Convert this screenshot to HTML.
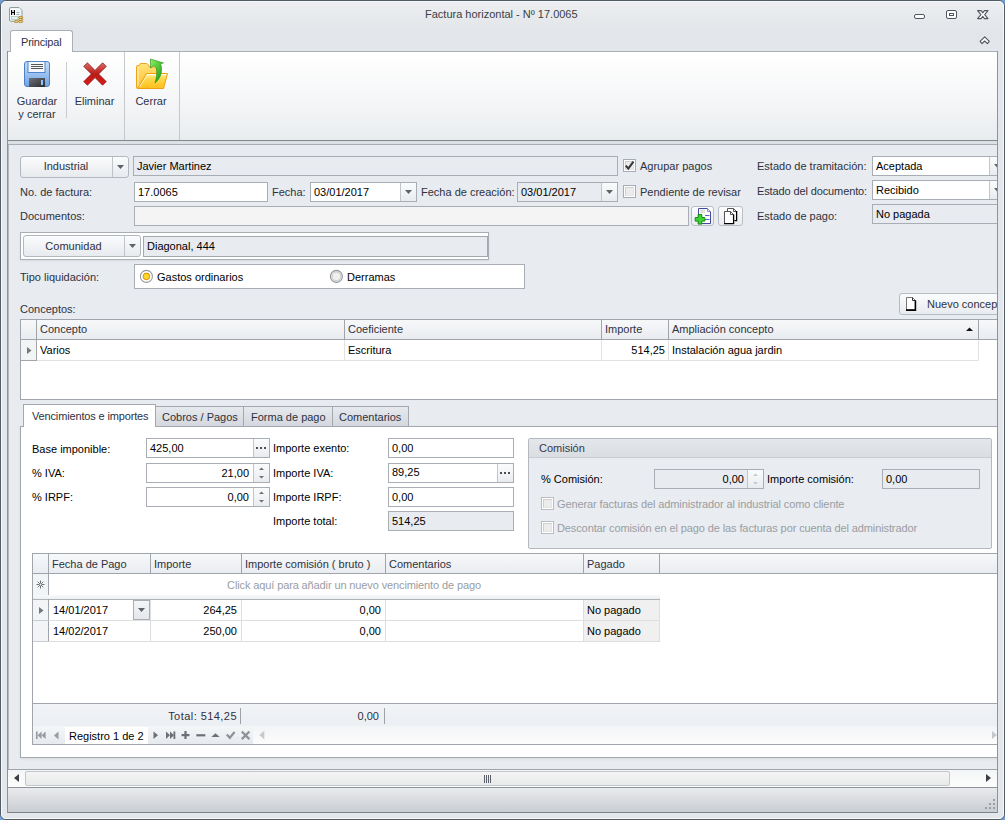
<!DOCTYPE html><html><head><meta charset="utf-8"><style>
*{margin:0;padding:0;box-sizing:border-box}
html,body{width:1005px;height:820px;overflow:hidden;background:#6f9fd8}
body{position:relative;font-family:"Liberation Sans",sans-serif;font-size:11px;color:#1e1e1e}
.r{position:absolute}
.t{position:absolute;white-space:pre;line-height:13px;font-size:11px;color:#202020}
.lbl{color:#2e3240}
.dk{color:#000}
.gry{color:#9a9da2}
.fld{position:absolute;background:#fff;border:1px solid #a9aeb5}
.ro{background:#e8ebef}
.btn{position:absolute;border:1px solid #b7bcc3;border-radius:3px;background:linear-gradient(#fbfcfd,#e9ecf0)}
.ddb{position:absolute;top:0;bottom:0;width:17px;right:0;border-left:1px solid #b9bec4;background:linear-gradient(#f9fafb,#e6e9ed)}
.arr{position:absolute;width:0;height:0;border-left:4px solid transparent;border-right:4px solid transparent;border-top:4px solid #5a6068}
.chk{position:absolute;width:13px;height:13px;border:1px solid #a9aeb5;background:linear-gradient(#eceef1,#f8f9fa)}
</style></head><body>
<div class="r " style="left:0px;top:0px;width:1005px;height:820px;background:#e3e6ea;border:1px solid #535b65;border-radius:6px 6px 6px 6px"></div>
<div class="r " style="left:1px;top:1px;width:1003px;height:818px;border:1px solid #f7f8f9;border-radius:5px 5px 5px 5px;background:linear-gradient(#eceef1 0px,#e2e5e9 30px,#e3e6ea 50px)"></div>
<svg class="r" style="left:8px;top:6px" width="18" height="18" viewBox="0 0 18 18">
<path d="M2.8 1.5h8.2l3 3v9.5a1.3 1.3 0 0 1-1.3 1.3h-9.9a1.3 1.3 0 0 1-1.3-1.3v-11.2a1.3 1.3 0 0 1 1.3-1.3z" fill="#eef7f7" stroke="#8d9b9b" stroke-width="1"/>
<circle cx="11.5" cy="3.3" r="0.9" fill="#fff"/>
<rect x="2.3" y="3" width="5.4" height="6.8" fill="#fff"/>
<path d="M3.6 4v5M6.4 4v5M3.6 6.5h2.8" stroke="#000" stroke-width="1.2"/>
<path d="M8.5 6.5h3M8.5 8.5h3" stroke="#93a3a3" stroke-width="0.9"/>
<rect x="3.5" y="10.5" width="6.5" height="3" fill="#dff1f1" stroke="#b3c4c4" stroke-width="0.8"/>
<g fill="#ecd27a" stroke="#a67c22" stroke-width="0.8">
<ellipse cx="12.6" cy="11.4" rx="2.2" ry="1.05"/><ellipse cx="12.6" cy="13.45" rx="2.2" ry="1.05"/><ellipse cx="12.6" cy="15.5" rx="2.2" ry="1.05"/><ellipse cx="8.3" cy="15.5" rx="2.2" ry="1.05"/>
</g></svg>
<div class="t " style="left:425px;top:8px;color:#3b3e44">Factura horizontal - Nº 17.0065</div>
<div class="r " style="left:914px;top:14px;width:11px;height:5px;background:#fff;border:1px solid #50565e;border-radius:2px"></div>
<div class="r " style="left:946px;top:10px;width:11px;height:9px;background:#fff;border:1px solid #50565e;border-radius:2px"></div>
<div class="r " style="left:949px;top:13px;width:5px;height:3px;border:1px solid #50565e"></div>
<svg class="r" style="left:976px;top:9px" width="14" height="12" viewBox="0 0 14 12">
<path d="M1.6 1.6H5.2L6.8 3.9L8.4 1.6H12L8.7 5.6L12 9.6H8.4L6.8 7.3L5.2 9.6H1.6L4.9 5.6Z" fill="#fff" stroke="#4f555d" stroke-width="1.1" stroke-linejoin="round"/>
</svg>
<svg class="r" style="left:979px;top:35px" width="12" height="11" viewBox="0 0 12 11">
<path d="M5.7 1.8L10.3 6.4L8.4 8.6L5.7 6L3 8.6L1.1 6.4Z" fill="#fff" stroke="#4f555d" stroke-width="1.1" stroke-linejoin="round"/>
</svg>
<div class="r " style="left:7px;top:51px;width:991px;height:90px;border:1px solid #a9afb7;border-bottom-color:#80868d;background:linear-gradient(#ffffff 0px,#f7f8f9 40px,#e9ecef 88px)"></div>
<div class="r " style="left:10px;top:30px;width:63px;height:22px;border:1px solid #a9afb7;border-bottom:none;border-radius:3px 3px 0 0;background:#fff"></div>
<div class="t " style="left:21px;top:36px;color:#2f3347;letter-spacing:-0.2px">Principal</div>
<svg class="r" style="left:24px;top:61px" width="26" height="26" viewBox="0 0 26 26">
<defs><linearGradient id="fb" x1="0" y1="0" x2="0" y2="1"><stop offset="0" stop-color="#c7def8"/><stop offset="1" stop-color="#6ea4e6"/></linearGradient>
<linearGradient id="fd" x1="0" y1="0" x2="1" y2="1"><stop offset="0" stop-color="#6e737a"/><stop offset="1" stop-color="#2a2b2e"/></linearGradient></defs>
<rect x="0.5" y="0.5" width="25" height="25" rx="2.5" fill="url(#fb)" stroke="#4f7fc3"/>
<rect x="4" y="0.5" width="17" height="11" fill="#f5f7fa" stroke="#4f86cf"/>
<path d="M7 3.5h12M7 5.5h12M7 7.5h12" stroke="#555" stroke-width="1"/>
<rect x="5" y="17" width="16" height="9" fill="url(#fd)"/>
<rect x="17" y="19" width="2" height="5" fill="#8ec3ff"/>
</svg>
<div class="r " style="left:66px;top:62px;width:1px;height:56px;background:#c9cdd2"></div>
<svg class="r" style="left:83px;top:62px" width="24" height="24" viewBox="0 0 24 24">
<defs><linearGradient id="xr" x1="0" y1="0" x2="0" y2="1"><stop offset="0" stop-color="#e06a66"/><stop offset="0.5" stop-color="#b81c18"/><stop offset="1" stop-color="#e01a14"/></linearGradient></defs>
<path d="M4.4 0.8 L12 8.4 L19.6 0.8 L23.2 4.4 L15.6 12 L23.2 19.6 L19.6 23.2 L12 15.6 L4.4 23.2 L0.8 19.6 L8.4 12 L0.8 4.4 Z" fill="url(#xr)" stroke="#8a1512" stroke-width="0.8" stroke-linejoin="round"/>
</svg>
<div class="r " style="left:124px;top:52px;width:1px;height:88px;background:#c5c9ce"></div>
<svg class="r" style="left:135px;top:58px" width="34" height="32" viewBox="0 0 34 32">
<defs><linearGradient id="fo" x1="0" y1="0" x2="0" y2="1"><stop offset="0" stop-color="#fff2b0"/><stop offset="0.35" stop-color="#ffd84a"/><stop offset="1" stop-color="#ffbe1c"/></linearGradient>
<linearGradient id="fk" x1="0" y1="0" x2="0" y2="1"><stop offset="0" stop-color="#ffe27a"/><stop offset="1" stop-color="#ffc22e"/></linearGradient>
<linearGradient id="ar" x1="0" y1="0" x2="1" y2="1"><stop offset="0" stop-color="#92f060"/><stop offset="0.5" stop-color="#4cc436"/><stop offset="1" stop-color="#14820c"/></linearGradient></defs>
<path d="M2.5 7.5 Q1.5 7.5 1.5 8.5 L1.5 29.5 Q1.5 30.5 2.5 30.5 L22 30.5 L22 9 L14.5 9 L13 6.5 Q12.5 5.5 11.5 5.5 L6 5.5 Q5 5.5 4.5 6.5 L4 7.5 Z" fill="url(#fk)" stroke="#eda21a"/>
<path d="M3 9v20" stroke="#fff6cf" stroke-width="1"/>
<path d="M11.5 15.5 L32.5 15.5 L28.5 30.5 L2.5 30.5 Z" fill="url(#fo)" stroke="#ee9f14" stroke-linejoin="round"/>
<path d="M12.3 16.6 L31.2 16.6" stroke="#fffbe6" stroke-width="1.2"/>
<path d="M4.5 29 L12.5 17" stroke="#fff6cf" stroke-width="0.9"/>
<path d="M15.5 1 L15.5 10 L19 7.5 C22 9.5 23 14 20 25 C26 20 28 13 25.5 5.5 L28.5 5 Z" fill="url(#ar)" stroke="#238a18" stroke-width="0.6"/>
</svg>
<div class="r " style="left:179px;top:52px;width:1px;height:88px;background:#c5c9ce"></div>
<div class="t " style="left:7.0px;width:60px;text-align:center;top:95px;color:#2f3347">Guardar</div>
<div class="t " style="left:7.0px;width:60px;text-align:center;top:108px;color:#2f3347">y cerrar</div>
<div class="t " style="left:64.5px;width:60px;text-align:center;top:95px;color:#2f3347">Eliminar</div>
<div class="t " style="left:121.0px;width:60px;text-align:center;top:95px;color:#2f3347">Cerrar</div>
<div class="r " style="left:8px;top:141px;width:989px;height:3px;background:#dde0e4"></div>
<div class="r " style="left:7px;top:144px;width:991px;height:626px;border-left:1px solid #8d939a;border-right:1px solid #8d939a;border-top:1px solid #a8adb4;border-bottom:1px solid #a0a5ac;background:#e8ebef"></div>
<div class="r " style="left:8px;top:145px;width:1px;height:624px;background:#b4b9bf"></div>
<div class="r" style="left:0;top:0;width:997px;height:769px;overflow:hidden">
<div class="r " style="left:20px;top:156px;width:109px;height:22px;border:1px solid #b3b8bf;border-radius:3px;background:linear-gradient(#fbfcfd,#e7eaee)"></div>
<div class="r " style="left:112px;top:157px;width:1px;height:20px;background:#c0c4ca"></div>
<svg class="r" style="left:117px;top:165px" width="8" height="5"><path d="M0 0h7l-3.5 4z" fill="#5d636b"/></svg>
<div class="t lbl" style="left:20.0px;width:92px;text-align:center;top:160px;">Industrial</div>
<div class="r fld ro" style="left:133px;top:156px;width:485px;height:20px;"></div>
<div class="t dk" style="left:137px;top:160px;">Javier Martinez</div>
<div class="r " style="left:623px;top:159px;width:13px;height:13px;border:1px solid #a5acb5;background:#fff"></div>
<div class="r " style="left:625px;top:161px;width:9px;height:9px;border:1px solid #cfcfcf;border-right-color:#e4e4e4;border-bottom-color:#e4e4e4;background:#ececec"></div>
<svg class="r" style="left:623px;top:159px" width="13" height="13" viewBox="0 0 13 13"><path d="M2.8 6.6 L5.3 9.6 L10.4 2.6" stroke="#37393d" stroke-width="2.1" fill="none"/></svg>
<div class="t lbl" style="left:640px;top:160px;">Agrupar pagos</div>
<div class="t lbl" style="left:757px;top:160px;">Estado de tramitación:</div>
<div class="r fld " style="left:872px;top:156px;width:140px;height:20px;"></div>
<div class="r " style="left:989px;top:157px;width:17px;height:18px;border-left:1px solid #c2c6cc;background:linear-gradient(#fafbfc,#e9ecef);"></div>
<svg class="r" style="left:994px;top:164px" width="8" height="5"><path d="M0 0h7l-3.5 4z" fill="#5d636b"/></svg>
<div class="t dk" style="left:876px;top:160px;">Aceptada</div>
<div class="t lbl" style="left:20px;top:186px;">No. de factura:</div>
<div class="r fld " style="left:134px;top:182px;width:134px;height:20px;"></div>
<div class="t dk" style="left:138px;top:186px;">17.0065</div>
<div class="t lbl" style="left:272px;top:186px;">Fecha:</div>
<div class="r fld " style="left:310px;top:182px;width:107px;height:20px;"></div>
<div class="r " style="left:400px;top:183px;width:16px;height:18px;border-left:1px solid #c2c6cc;background:linear-gradient(#fafbfc,#e9ecef);"></div>
<svg class="r" style="left:405px;top:190px" width="8" height="5"><path d="M0 0h7l-3.5 4z" fill="#5d636b"/></svg>
<div class="t dk" style="left:314px;top:186px;">03/01/2017</div>
<div class="t lbl" style="left:421px;top:186px;">Fecha de creación:</div>
<div class="r fld ro" style="left:517px;top:182px;width:101px;height:20px;"></div>
<div class="r " style="left:601px;top:183px;width:16px;height:18px;border-left:1px solid #c2c6cc;background:linear-gradient(#fafbfc,#e9ecef);"></div>
<svg class="r" style="left:606px;top:190px" width="8" height="5"><path d="M0 0h7l-3.5 4z" fill="#5d636b"/></svg>
<div class="t dk" style="left:521px;top:186px;">03/01/2017</div>
<div class="r " style="left:623px;top:185px;width:13px;height:13px;border:1px solid #a5acb5;background:#fff"></div>
<div class="r " style="left:625px;top:187px;width:9px;height:9px;border:1px solid #cfcfcf;border-right-color:#e4e4e4;border-bottom-color:#e4e4e4;background:#ececec"></div>
<div class="t lbl" style="left:640px;top:186px;">Pendiente de revisar</div>
<div class="t lbl" style="left:757px;top:185px;letter-spacing:-0.12px">Estado del documento:</div>
<div class="r fld " style="left:872px;top:180px;width:140px;height:20px;"></div>
<div class="r " style="left:989px;top:181px;width:17px;height:18px;border-left:1px solid #c2c6cc;background:linear-gradient(#fafbfc,#e9ecef);"></div>
<svg class="r" style="left:994px;top:188px" width="8" height="5"><path d="M0 0h7l-3.5 4z" fill="#5d636b"/></svg>
<div class="t dk" style="left:876px;top:184px;">Recibido</div>
<div class="t lbl" style="left:20px;top:210px;">Documentos:</div>
<div class="r fld " style="left:134px;top:206px;width:555px;height:20px;background:#f4f4f4"></div>
<div class="r " style="left:691px;top:206px;width:23px;height:20px;border:1px solid #b9bec4;border-radius:3px;background:linear-gradient(#fbfcfd,#e9ecf0)"></div>
<svg class="r" style="left:694px;top:206px" width="20" height="20" viewBox="0 0 20 20">
<path d="M4.5 2.5h9l3 3v12h-12z" fill="#fff" stroke="#454a9a" stroke-width="1" stroke-linejoin="miter"/>
<path d="M13.5 2.5v3h3" fill="#e8e8f4" stroke="#8c90c8" stroke-width="1"/>
<rect x="6" y="3.5" width="5" height="3.5" fill="#e2e2e2"/>
<path d="M11 9.5h4.5M11 13.5h4.5" stroke="#5a63d0" stroke-width="1"/>
<path d="M4.2 8.5h3.6v3h3v3.6h-3v3h-3.6v-3h-3v-3.6h3z" fill="#3dd435" stroke="#168c12" stroke-width="1"/>
</svg>
<div class="r " style="left:718px;top:206px;width:25px;height:20px;border:1px solid #b9bec4;border-radius:3px;background:linear-gradient(#fbfcfd,#e9ecf0)"></div>
<svg class="r" style="left:722px;top:206px" width="20" height="20" viewBox="0 0 20 20">
<path d="M5.5 2.5h6l3 3v9h-9z" fill="#fff" stroke="#555" stroke-width="1"/>
<path d="M11.5 2.5v3h3" fill="none" stroke="#555" stroke-width="1"/>
<path d="M14.6 5v9.6h-1.5" stroke="#000" stroke-width="1.3" fill="none"/>
<path d="M2.5 5.5h6l3 3v9h-9z" fill="#fff" stroke="#555" stroke-width="1"/>
<path d="M8.5 5.5v3h3" fill="none" stroke="#555" stroke-width="1"/>
<path d="M2 17.6h9.8M11.6 8.5v9.6" stroke="#000" stroke-width="1.3"/>
</svg>
<div class="t lbl" style="left:757px;top:210px;">Estado de pago:</div>
<div class="r fld ro" style="left:872px;top:204px;width:140px;height:20px;"></div>
<div class="t dk" style="left:876px;top:208px;">No pagada</div>
<div class="r " style="left:20px;top:232px;width:469px;height:28px;border:1px solid #a9aeb5;background:#fff;box-shadow:0 1px 2px rgba(0,0,0,0.07)"></div>
<div class="r " style="left:21px;top:233px;width:467px;height:26px;background:linear-gradient(#fff,#fff)"></div>
<div class="r " style="left:23px;top:235px;width:118px;height:22px;border:1px solid #b3b8bf;border-radius:3px;background:linear-gradient(#fbfcfd,#e7eaee)"></div>
<div class="r " style="left:124px;top:236px;width:1px;height:20px;background:#c0c4ca"></div>
<svg class="r" style="left:129px;top:244px" width="8" height="5"><path d="M0 0h7l-3.5 4z" fill="#5d636b"/></svg>
<div class="t lbl" style="left:23.0px;width:101px;text-align:center;top:240px;">Comunidad</div>
<div class="r fld ro" style="left:143px;top:236px;width:345px;height:21px;border-color:#a3a8af"></div>
<div class="t dk" style="left:147px;top:240px;">Diagonal, 444</div>
<div class="t lbl" style="left:20px;top:271px;">Tipo liquidación:</div>
<div class="r fld " style="left:134px;top:264px;width:391px;height:25px;"></div>
<svg class="r" style="left:139px;top:269px" width="15" height="15" viewBox="0 0 15 15"><circle cx="7.4" cy="7.4" r="6" fill="#fff" stroke="#959aa1" stroke-width="1.1"/><circle cx="7.4" cy="7.4" r="3.3" fill="#ffd726" stroke="#e08a10" stroke-width="1"/></svg>
<div class="t dk" style="left:157px;top:271px;">Gastos ordinarios</div>
<svg class="r" style="left:329px;top:269px" width="15" height="15" viewBox="0 0 15 15"><circle cx="7.4" cy="7.4" r="6" fill="#e4e4e4" stroke="#959aa1" stroke-width="1.1"/><circle cx="7.4" cy="7.4" r="4.3" fill="#f0f0f0" stroke="#c4c4c4" stroke-width="0.8"/></svg>
<div class="t dk" style="left:347px;top:271px;">Derramas</div>
<div class="t lbl" style="left:20px;top:303px;">Conceptos:</div>
<div class="r " style="left:899px;top:293px;width:110px;height:22px;border:1px solid #b7bcc3;border-radius:3px;background:linear-gradient(#fbfcfd,#e8ebef)"></div>
<svg class="r" style="left:905px;top:296px" width="13" height="15" viewBox="0 0 13 15">
<path d="M1.5 1.5h6l3 3v9.5h-9z" fill="#fff" stroke="#777" stroke-width="1"/>
<path d="M7.5 1.5v3h3" fill="none" stroke="#333" stroke-width="1"/>
<path d="M10.4 4.5v9.6h-9.4" fill="none" stroke="#000" stroke-width="1.6"/>
</svg>
<div class="t lbl" style="left:927px;top:298px;">Nuevo concepto</div>
<div class="r " style="left:20px;top:319px;width:990px;height:81px;border:1px solid #a0a5ac;background:#fff"></div>
<div class="r " style="left:21px;top:320px;width:990px;height:19px;background:linear-gradient(#f7f8fa,#e9ecf0)"></div>
<div class="r " style="left:21px;top:339px;width:976px;height:1px;background:#a0a5ac"></div>
<div class="r " style="left:36px;top:320px;width:1px;height:40px;background:#a0a5ac"></div>
<div class="r " style="left:21px;top:340px;width:15px;height:20px;background:#f3f4f6"></div>
<div class="r " style="left:344px;top:320px;width:1px;height:19px;background:#a0a5ac"></div>
<div class="r " style="left:601px;top:320px;width:1px;height:19px;background:#a0a5ac"></div>
<div class="r " style="left:668px;top:320px;width:1px;height:19px;background:#a0a5ac"></div>
<div class="r " style="left:978px;top:320px;width:1px;height:19px;background:#a0a5ac"></div>
<div class="r " style="left:344px;top:340px;width:1px;height:20px;background:#dfe1e4"></div>
<div class="r " style="left:601px;top:340px;width:1px;height:20px;background:#dfe1e4"></div>
<div class="r " style="left:668px;top:340px;width:1px;height:20px;background:#dfe1e4"></div>
<div class="r " style="left:978px;top:340px;width:1px;height:21px;background:#dfe1e4"></div>
<div class="r " style="left:37px;top:360px;width:942px;height:1px;background:#dfe1e4"></div>
<div class="r " style="left:21px;top:360px;width:16px;height:1px;background:#a0a5ac"></div>
<svg class="r" style="left:27px;top:347px" width="6" height="8"><path d="M0 0L4.5 3.5L0 7z" fill="#73787f"/></svg>
<div class="t lbl" style="left:40px;top:323px;">Concepto</div>
<div class="t lbl" style="left:348px;top:323px;">Coeficiente</div>
<div class="t lbl" style="left:605px;top:323px;">Importe</div>
<div class="t lbl" style="left:672px;top:323px;">Ampliación concepto</div>
<svg class="r" style="left:966px;top:327px" width="8" height="5"><path d="M0 4h7l-3.5-3.5z" fill="#111"/></svg>
<div class="t dk" style="left:40px;top:344px;">Varios</div>
<div class="t dk" style="left:348px;top:344px;">Escritura</div>
<div class="t dk" style="left:265px;width:400px;text-align:right;top:344px;">514,25</div>
<div class="t dk" style="left:672px;top:344px;">Instalación agua jardin</div>
<div class="r " style="left:20px;top:426px;width:990px;height:332px;border:1px solid #a3a8af;background:#fff;box-shadow:0 1px 3px rgba(0,0,0,0.07)"></div>
<div class="r " style="left:155px;top:406px;width:89px;height:21px;border:1px solid #a3a8af;background:linear-gradient(#e6e9ed,#d4d8de)"></div>
<div class="r " style="left:243px;top:406px;width:90px;height:21px;border:1px solid #a3a8af;background:linear-gradient(#e6e9ed,#d4d8de)"></div>
<div class="r " style="left:332px;top:406px;width:77px;height:21px;border:1px solid #a3a8af;background:linear-gradient(#e6e9ed,#d4d8de)"></div>
<div class="r " style="left:23px;top:404px;width:133px;height:23px;border:1px solid #a3a8af;border-bottom:none;background:#fff"></div>
<div class="t lbl" style="left:32px;top:410px;letter-spacing:-0.15px">Vencimientos e importes</div>
<div class="t lbl" style="left:162px;top:411px;">Cobros / Pagos</div>
<div class="t lbl" style="left:251px;top:411px;">Forma de pago</div>
<div class="t lbl" style="left:339px;top:411px;">Comentarios</div>
<div class="t dk" style="left:32px;top:443px;">Base imponible:</div>
<div class="r fld " style="left:146px;top:438px;width:124px;height:20px;"></div>
<div class="r " style="left:253px;top:439px;width:16px;height:18px;border-left:1px solid #c2c6cc;background:linear-gradient(#fafbfc,#e9ecef)"></div>
<svg class="r" style="left:256px;top:447px" width="11" height="3"><rect x="0" y="0" width="2" height="2" fill="#4a4d52"/><rect x="4" y="0" width="2" height="2" fill="#4a4d52"/><rect x="8" y="0" width="2" height="2" fill="#4a4d52"/></svg>
<div class="t dk" style="left:150px;top:442px;">425,00</div>
<div class="t dk" style="left:32px;top:467px;">% IVA:</div>
<div class="r fld " style="left:146px;top:463px;width:124px;height:20px;"></div>
<div class="r " style="left:253px;top:464px;width:16px;height:18px;border-left:1px solid #c2c6cc;background:linear-gradient(#fafbfc,#e9ecef)"></div>
<svg class="r" style="left:259px;top:467px" width="6" height="12"><path d="M0 3h5l-2.5-2.5z M0 9h5l-2.5 2.5z" fill="#6a7078"/></svg>
<div class="t dk" style="left:-151px;width:400px;text-align:right;top:467px;">21,00</div>
<div class="t dk" style="left:32px;top:491px;">% IRPF:</div>
<div class="r fld " style="left:146px;top:487px;width:124px;height:20px;"></div>
<div class="r " style="left:253px;top:488px;width:16px;height:18px;border-left:1px solid #c2c6cc;background:linear-gradient(#fafbfc,#e9ecef)"></div>
<svg class="r" style="left:259px;top:491px" width="6" height="12"><path d="M0 3h5l-2.5-2.5z M0 9h5l-2.5 2.5z" fill="#6a7078"/></svg>
<div class="t dk" style="left:-151px;width:400px;text-align:right;top:491px;">0,00</div>
<div class="t dk" style="left:273px;top:442px;">Importe exento:</div>
<div class="r fld " style="left:388px;top:438px;width:126px;height:20px;"></div>
<div class="t dk" style="left:392px;top:442px;">0,00</div>
<div class="t dk" style="left:273px;top:467px;">Importe IVA:</div>
<div class="r fld " style="left:388px;top:463px;width:126px;height:20px;"></div>
<div class="r " style="left:497px;top:464px;width:16px;height:18px;border-left:1px solid #c2c6cc;background:linear-gradient(#fafbfc,#e9ecef)"></div>
<svg class="r" style="left:500px;top:472px" width="11" height="3"><rect x="0" y="0" width="2" height="2" fill="#4a4d52"/><rect x="4" y="0" width="2" height="2" fill="#4a4d52"/><rect x="8" y="0" width="2" height="2" fill="#4a4d52"/></svg>
<div class="t dk" style="left:392px;top:466px;">89,25</div>
<div class="t dk" style="left:273px;top:491px;">Importe IRPF:</div>
<div class="r fld " style="left:388px;top:487px;width:126px;height:20px;"></div>
<div class="t dk" style="left:392px;top:491px;">0,00</div>
<div class="t dk" style="left:273px;top:515px;">Importe total:</div>
<div class="r fld ro" style="left:388px;top:511px;width:126px;height:20px;"></div>
<div class="t dk" style="left:392px;top:515px;">514,25</div>
<div class="r " style="left:528px;top:438px;width:464px;height:111px;border:1px solid #b5bac0;border-radius:2px;background:#e9ecf0"></div>
<div class="r " style="left:529px;top:439px;width:462px;height:19px;background:linear-gradient(#e3e6ea,#dadde2);border-bottom:1px solid #c8ccd1"></div>
<div class="t " style="left:539px;top:442px;color:#35394a">Comisión</div>
<div class="t dk" style="left:541px;top:473px;">% Comisión:</div>
<div class="r fld ro" style="left:654px;top:469px;width:110px;height:20px;border-color:#a9aeb5"></div>
<div class="r " style="left:747px;top:470px;width:16px;height:18px;border-left:1px solid #c2c6cc;background:linear-gradient(#fafbfc,#e9ecef)"></div>
<svg class="r" style="left:753px;top:473px" width="6" height="12"><path d="M0 3h5l-2.5-2.5z M0 9h5l-2.5 2.5z" fill="#c4c8cd"/></svg>
<div class="t dk" style="left:344px;width:400px;text-align:right;top:473px;">0,00</div>
<div class="t dk" style="left:767px;top:473px;">Importe comisión:</div>
<div class="r fld ro" style="left:882px;top:469px;width:98px;height:20px;border-color:#a9aeb5"></div>
<div class="t dk" style="left:886px;top:473px;">0,00</div>
<div class="r " style="left:541px;top:497px;width:13px;height:13px;border:1px solid #b9bdc3;background:#fff"></div>
<div class="r " style="left:543px;top:499px;width:9px;height:9px;border:1px solid #cfcfcf;border-right-color:#e4e4e4;border-bottom-color:#e4e4e4;background:#ececec"></div>
<div class="t gry" style="left:557px;top:498px;letter-spacing:-0.1px">Generar facturas del administrador al industrial como cliente</div>
<div class="r " style="left:541px;top:521px;width:13px;height:13px;border:1px solid #b9bdc3;background:#fff"></div>
<div class="r " style="left:543px;top:523px;width:9px;height:9px;border:1px solid #cfcfcf;border-right-color:#e4e4e4;border-bottom-color:#e4e4e4;background:#ececec"></div>
<div class="t gry" style="left:557px;top:522px;letter-spacing:-0.11px">Descontar comisión en el pago de las facturas por cuenta del administrador</div>
<div class="r " style="left:32px;top:553px;width:980px;height:192px;border:1px solid #a0a5ac;background:#fff"></div>
<div class="r " style="left:33px;top:554px;width:980px;height:19px;background:linear-gradient(#f7f8fa,#e9ecf0)"></div>
<div class="r " style="left:33px;top:573px;width:964px;height:1px;background:#a0a5ac"></div>
<div class="r " style="left:48px;top:554px;width:1px;height:41px;background:#a0a5ac"></div>
<div class="r " style="left:150px;top:554px;width:1px;height:19px;background:#a0a5ac"></div>
<div class="r " style="left:241px;top:554px;width:1px;height:19px;background:#a0a5ac"></div>
<div class="r " style="left:385px;top:554px;width:1px;height:19px;background:#a0a5ac"></div>
<div class="r " style="left:583px;top:554px;width:1px;height:19px;background:#a0a5ac"></div>
<div class="r " style="left:659px;top:554px;width:1px;height:19px;background:#a0a5ac"></div>
<div class="r " style="left:33px;top:574px;width:15px;height:21px;background:#f3f4f6"></div>
<div class="r " style="left:33px;top:595px;width:16px;height:1px;background:#a0a5ac"></div>
<svg class="r" style="left:36px;top:580px" width="9" height="9" viewBox="0 0 9 9"><path d="M4.5 0.5v8M0.5 4.5h8M1.7 1.7l5.6 5.6M7.3 1.7l-5.6 5.6" stroke="#6e737a" stroke-width="1"/><circle cx="4.5" cy="4.5" r="1" fill="#f3f4f6"/></svg>
<div class="t lbl" style="left:52px;top:558px;">Fecha de Pago</div>
<div class="t lbl" style="left:154px;top:558px;">Importe</div>
<div class="t lbl" style="left:245px;top:558px;">Importe comisión ( bruto )</div>
<div class="t lbl" style="left:389px;top:558px;">Comentarios</div>
<div class="t lbl" style="left:587px;top:558px;">Pagado</div>
<div class="t gry" style="left:154.0px;width:400px;text-align:center;top:579px;letter-spacing:-0.12px">Click aquí para añadir un nuevo vencimiento de pago</div>
<div class="r " style="left:33px;top:595px;width:627px;height:4px;background:linear-gradient(#f7f8f9,#eef0f3)"></div>
<div class="r " style="left:33px;top:599px;width:627px;height:1px;background:#aeb3b9"></div>
<div class="r " style="left:33px;top:600px;width:15px;height:41px;background:#f3f4f6"></div>
<div class="r " style="left:48px;top:599px;width:1px;height:42px;background:#a0a5ac"></div>
<div class="r " style="left:33px;top:620px;width:16px;height:1px;background:#c9cdd2"></div>
<div class="r " style="left:33px;top:641px;width:16px;height:1px;background:#c9cdd2"></div>
<div class="r " style="left:584px;top:600px;width:75px;height:41px;background:#f0f0f0"></div>
<div class="r " style="left:150px;top:600px;width:1px;height:41px;background:#dcdee1"></div>
<div class="r " style="left:241px;top:600px;width:1px;height:41px;background:#dcdee1"></div>
<div class="r " style="left:385px;top:600px;width:1px;height:41px;background:#dcdee1"></div>
<div class="r " style="left:583px;top:600px;width:1px;height:41px;background:#dcdee1"></div>
<div class="r " style="left:659px;top:600px;width:1px;height:41px;background:#dcdee1"></div>
<div class="r " style="left:49px;top:620px;width:611px;height:1px;background:#dcdee1"></div>
<div class="r " style="left:49px;top:641px;width:611px;height:1px;background:#dcdee1"></div>
<svg class="r" style="left:38.5px;top:607px" width="6" height="8"><path d="M0 0L4.5 3.5L0 7z" fill="#73787f"/></svg>
<div class="r " style="left:133px;top:600px;width:17px;height:20px;border:1px solid #a9aeb5;background:linear-gradient(#f4f5f7,#e4e7eb)"></div>
<svg class="r" style="left:138px;top:608px" width="8" height="5"><path d="M0 0h7l-3.5 4z" fill="#5d636b"/></svg>
<div class="t dk" style="left:53px;top:604px;">14/01/2017</div>
<div class="t dk" style="left:-163px;width:400px;text-align:right;top:604px;">264,25</div>
<div class="t dk" style="left:-19px;width:400px;text-align:right;top:604px;">0,00</div>
<div class="t dk" style="left:587px;top:604px;">No pagado</div>
<div class="t dk" style="left:53px;top:625px;">14/02/2017</div>
<div class="t dk" style="left:-163px;width:400px;text-align:right;top:625px;">250,00</div>
<div class="t dk" style="left:-19px;width:400px;text-align:right;top:625px;">0,00</div>
<div class="t dk" style="left:587px;top:625px;">No pagado</div>
<div class="r " style="left:33px;top:703px;width:964px;height:1px;background:#a0a5ac"></div>
<div class="r " style="left:33px;top:704px;width:965px;height:22px;background:linear-gradient(#f1f3f6,#eceff3)"></div>
<div class="t lbl" style="left:-163px;width:400px;text-align:right;top:710px;letter-spacing:0.45px">Total: 514,25</div>
<div class="r " style="left:240px;top:708px;width:1px;height:16px;background:#9ea3aa"></div>
<div class="t lbl" style="left:-21px;width:400px;text-align:right;top:710px;">0,00</div>
<div class="r " style="left:384px;top:708px;width:1px;height:16px;background:#9ea3aa"></div>
<div class="r " style="left:33px;top:726px;width:965px;height:18px;background:linear-gradient(#f4f6f8,#e7eaee)"></div>
<div class="r " style="left:253px;top:726px;width:745px;height:18px;background:linear-gradient(#f3f4f6,#fcfcfd)"></div>
<div class="r " style="left:65px;top:727px;width:83px;height:17px;background:#fff"></div>
<div class="t dk" style="left:69px;top:730px;">Registro 1 de 2</div>
<svg class="r" style="left:33px;top:726px" width="240" height="18" viewBox="0 0 240 18">
<g fill="#979ba1">
<rect x="3" y="5.5" width="1.6" height="7.5"/><path d="M8.6 5.5v7.5l-4-3.75z"/><path d="M12.6 5.5v7.5l-4-3.75z"/>
<path d="M25.5 5.5v8l-4.5-4z"/>
</g>
<g fill="#6b7077">
<path d="M120.5 5.5v7.5l4.5-3.75z"/>
<path d="M133 5.5v7.5l4-3.75z"/><path d="M137 5.5v7.5l4-3.75z"/><rect x="140.5" y="5.5" width="1.8" height="7.5"/>
<rect x="148.5" y="8" width="8" height="2.2"/><rect x="151.4" y="5" width="2.2" height="8"/>
<rect x="163.3" y="8.2" width="9" height="2.2"/>
<path d="M178.3 11h8.4l-4.2-3.8z"/>
</g>
<g fill="none" stroke="#8e9298" stroke-width="2.2"><path d="M193.8 8.6l3 3.2 4.8-5.8"/></g>
<g fill="none" stroke="#8e9298" stroke-width="2.2"><path d="M208.8 5.5l7.6 7.6M216.4 5.5l-7.6 7.6"/></g>
<path d="M231.3 4.8v8.6l-5-4.3z" fill="#c6cacf"/>
</svg>
<div class="r " style="left:992px;top:731px;width:0px;height:0px;border-top:4.5px solid transparent;border-bottom:4.5px solid transparent;border-left:5px solid #c5c9ce"></div>
</div>
<div class="r " style="left:997px;top:144px;width:1px;height:626px;background:#8d939a"></div>
<div class="r " style="left:7px;top:51px;width:1px;height:761px;background:#8d939a"></div>
<div class="r " style="left:997px;top:51px;width:1px;height:761px;background:#8d939a"></div>
<div class="r " style="left:8px;top:770px;width:989px;height:17px;background:linear-gradient(#f4f5f6,#fdfdfd)"></div>
<div class="r " style="left:14px;top:774px;width:0px;height:0px;border-top:4.5px solid transparent;border-bottom:4.5px solid transparent;border-right:5px solid #3c4046"></div>
<div class="r " style="left:25px;top:771px;width:925px;height:15px;border:1px solid #c3c7cc;border-radius:2px;background:linear-gradient(#f4f4f4,#e8e9ea)"></div>
<div class="r " style="left:484px;top:775px;width:1px;height:8px;background:#5b6068"></div>
<div class="r " style="left:486px;top:775px;width:1px;height:8px;background:#5b6068"></div>
<div class="r " style="left:488px;top:775px;width:1px;height:8px;background:#5b6068"></div>
<div class="r " style="left:490px;top:775px;width:1px;height:8px;background:#5b6068"></div>
<div class="r " style="left:986px;top:774px;width:0px;height:0px;border-top:4.5px solid transparent;border-bottom:4.5px solid transparent;border-left:5px solid #3c4046"></div>
<div class="r " style="left:7px;top:787px;width:991px;height:1px;background:#8d939a"></div>
<div class="r " style="left:7px;top:787px;width:991px;height:26px;border-left:1px solid #8d939a;border-right:1px solid #8d939a;border-top:1px solid #8d939a;border-bottom:1px solid #7c828a;background:linear-gradient(#e9ebee,#c9ccd1)"></div>
<svg class="r" style="left:984px;top:797px" width="12" height="13" viewBox="0 0 12 13"><g fill="#9a9fa6">
<rect x="9" y="2" width="2" height="2"/><rect x="5" y="6" width="2" height="2"/><rect x="9" y="6" width="2" height="2"/>
<rect x="1" y="10" width="2" height="2"/><rect x="5" y="10" width="2" height="2"/><rect x="9" y="10" width="2" height="2"/></g></svg>
</body></html>
